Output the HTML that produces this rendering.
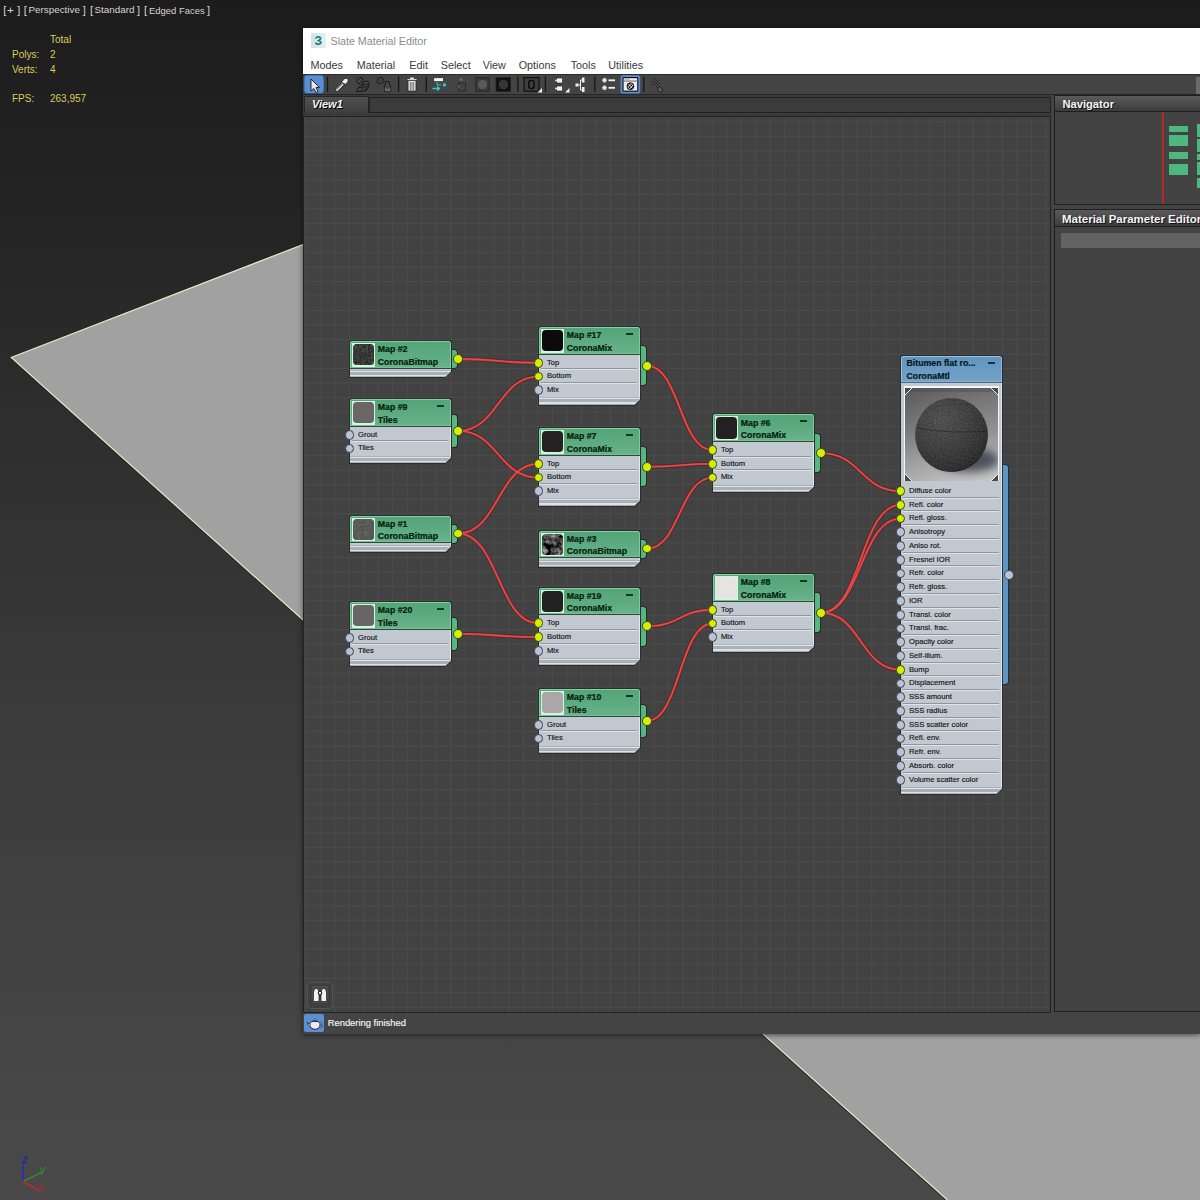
<!DOCTYPE html><html><head><meta charset='utf-8'><style>
*{margin:0;padding:0;box-sizing:border-box}
html,body{width:1200px;height:1200px;overflow:hidden}
body{position:relative;font-family:"Liberation Sans",sans-serif;background:linear-gradient(to bottom,#1c1c1c 0px,#232323 190px,#2b2b2b 360px,#3a3a3a 690px,#474747 1100px,#494949 1200px)}
.a{position:absolute}
.t{position:absolute;white-space:nowrap;line-height:1}
.node{position:absolute;width:103px}
.hdr{position:absolute;left:0;top:0;width:103px;height:28.8px;border:1px solid #27302a;border-bottom:1.3px solid #2f4a3a;border-radius:3px 3px 0 0;background:linear-gradient(to bottom,#53a478 0%,#5daa80 50%,#69b38a 100%);box-shadow:inset 1px 1px 0 #86cfa3,inset -1px 0 0 #80c9a0,inset 0 -1px 0 #79bd92}
.hdr.blue .ttl{color:#06142a}.hdr.blue .minus{background:#14304e}
.hdr.blue{border-color:#262c33;border-bottom-color:#4f6b84;background:linear-gradient(to bottom,#6394bd 0%,#6a9bc2 50%,#72a2c7 100%);box-shadow:inset 1px 1px 0 #9cc0de,inset -1px 0 0 #90b6d8,inset 0 -1px 0 #85aed0}
.thumb{position:absolute;left:1.9px;top:2px;width:23.6px;height:23.6px;background:#d6f2e0}
.thumb i{position:absolute;left:1.1px;top:1.1px;width:21.4px;height:21.4px;border-radius:3.8px;overflow:hidden}
.ttl{position:absolute;left:27.8px;font-weight:bold;font-size:8.75px;color:#04200c;line-height:1;white-space:nowrap;-webkit-text-stroke:0.2px #04200c}
.minus{position:absolute;left:87.3px;top:6.2px;width:6.6px;height:2px;background:#0f3a20}
.body{position:absolute;left:0;width:103px;border-left:1px solid #2a2e33;border-right:1px solid #2a2e33;background:#c1c8d0;box-shadow:inset -1px 0 0 #e2e7ec;clip-path:polygon(0 0,100% 0,100% calc(100% - 6px),calc(100% - 6px) 100%,0 100%)}
.foot{position:absolute;left:1px;width:100px;background:linear-gradient(to bottom,#a9b0b8 0,#a9b0b8 1.2px,#dfe4e8 1.2px,#dfe4e8 2.4px,#a8afb7 2.4px,#aab1b9 5px,#dce1e6 5px,#dce1e6 100%);clip-path:polygon(0 0,100% 0,100% calc(100% - 5px),calc(100% - 5px) 100%,0 100%)}
.row{position:absolute;left:1px;width:100px;height:13.75px}
.row b{position:absolute;left:2px;right:2px;bottom:0;height:1px;background:#8f969e;box-shadow:0 1px 0 #dfe4e9}
.lbl{position:absolute;left:8px;top:3.1px;font-size:7.65px;color:#121416;line-height:1;white-space:nowrap;-webkit-text-stroke:0.15px #121416}
.slot{position:absolute;width:9.8px;height:9.8px;border-radius:50%;background:#b8c4d6;border:1px solid #3a4149}
.slot.on{background:#d2f000;border-color:#3a4025}
.otab{position:absolute;width:6.5px;border:1px solid #232a25;border-left:none;border-radius:0 4px 4px 0;background:linear-gradient(to right,#4fb27c,#5cb986)}
.otab.blue{background:#5d95c3;border-color:#262e37}
</style></head><body>
<svg width="0" height="0" style="position:absolute"><defs><filter id="nz1" x="0" y="0" width="100%" height="100%" color-interpolation-filters="sRGB"><feTurbulence type="fractalNoise" baseFrequency="0.45" numOctaves="2" seed="3"/><feColorMatrix type="matrix" values="0.33 0.33 0.33 0 0  0.33 0.33 0.33 0 0  0.33 0.33 0.33 0 0  0 0 0 0 1"/><feComponentTransfer><feFuncR type="linear" slope="0.6" intercept="-0.07"/><feFuncG type="linear" slope="0.6" intercept="-0.07"/><feFuncB type="linear" slope="0.6" intercept="-0.07"/></feComponentTransfer></filter><filter id="nz3" x="0" y="0" width="100%" height="100%" color-interpolation-filters="sRGB"><feTurbulence type="fractalNoise" baseFrequency="0.2" numOctaves="3" seed="7"/><feColorMatrix type="matrix" values="0.33 0.33 0.33 0 0  0.33 0.33 0.33 0 0  0.33 0.33 0.33 0 0  0 0 0 0 1"/><feComponentTransfer><feFuncR type="linear" slope="2.3" intercept="-0.88"/><feFuncG type="linear" slope="2.3" intercept="-0.88"/><feFuncB type="linear" slope="2.3" intercept="-0.88"/></feComponentTransfer></filter><filter id="nzs" x="0" y="0" width="100%" height="100%" color-interpolation-filters="sRGB"><feTurbulence type="turbulence" baseFrequency="0.9 0.25" numOctaves="2" seed="5"/><feColorMatrix type="matrix" values="0.33 0.33 0.33 0 0  0.33 0.33 0.33 0 0  0.33 0.33 0.33 0 0  0 0 0 0 1"/><feComponentTransfer><feFuncR type="linear" slope="0.22" intercept="0.295"/><feFuncG type="linear" slope="0.22" intercept="0.295"/><feFuncB type="linear" slope="0.22" intercept="0.295"/></feComponentTransfer></filter><filter id="nzb" x="0" y="0" width="100%" height="100%" color-interpolation-filters="sRGB"><feTurbulence type="fractalNoise" baseFrequency="0.6" numOctaves="2" seed="11"/><feColorMatrix type="matrix" values="0.33 0.33 0.33 0 0  0.33 0.33 0.33 0 0  0.33 0.33 0.33 0 0  0 0 0 0 1"/><feComponentTransfer><feFuncR type="linear" slope="1.6" intercept="-0.55"/><feFuncG type="linear" slope="1.6" intercept="-0.55"/><feFuncB type="linear" slope="1.6" intercept="-0.55"/></feComponentTransfer></filter><radialGradient id="sph" cx="0.36" cy="0.3" r="0.75"><stop offset="0" stop-color="#565656"/><stop offset="0.5" stop-color="#424242"/><stop offset="0.85" stop-color="#303030"/><stop offset="1" stop-color="#222"/></radialGradient><linearGradient id="pbg" x1="0" y1="0" x2="0" y2="1"><stop offset="0" stop-color="#646464"/><stop offset="0.45" stop-color="#888"/><stop offset="0.8" stop-color="#b0b0b0"/><stop offset="1" stop-color="#c4c4c4"/></linearGradient><linearGradient id="pbg2" x1="0" y1="0" x2="1" y2="0"><stop offset="0" stop-color="#000" stop-opacity="0.12"/><stop offset="1" stop-color="#fff" stop-opacity="0.08"/></linearGradient><filter id="blur3" x="-50%" y="-50%" width="200%" height="200%"><feGaussianBlur stdDeviation="4"/></filter><clipPath id="sphclip"><ellipse cx="46.5" cy="47" rx="36.3" ry="37"/></clipPath></defs></svg>
<svg class="a" style="left:0;top:0" width="1200" height="1200" viewBox="0 0 1200 1200">
<polygon points="11.25,357.5 400,207 1200,207 1200,1200 947.4,1200" fill="#a1a1a1"/>
<polyline points="400,206 10.2,357.5 947,1201" fill="none" stroke="#111" stroke-width="1.2" opacity="0.6"/>
<polyline points="400,207 11.25,357.5 947.4,1200" fill="none" stroke="#e4e4c4" stroke-width="1.3"/>
</svg>
<div class="t" style="left:3.3px;top:4.8px;font-size:11px;color:#d4d4d4">[</div>
<div class="t" style="left:7.0px;top:4.2px;font-size:11.6px;color:#d4d4d4">+</div>
<div class="t" style="left:17.3px;top:4.8px;font-size:11px;color:#d4d4d4">]</div>
<div class="t" style="left:23.8px;top:4.8px;font-size:11px;color:#d4d4d4">[</div>
<div class="t" style="left:28.4px;top:5.4px;font-size:9.9px;color:#d4d4d4">Perspective</div>
<div class="t" style="left:82.8px;top:4.8px;font-size:11px;color:#d4d4d4">]</div>
<div class="t" style="left:90px;top:4.8px;font-size:11px;color:#d4d4d4">[</div>
<div class="t" style="left:94.5px;top:5.4px;font-size:9.9px;color:#d4d4d4">Standard</div>
<div class="t" style="left:137.1px;top:4.8px;font-size:11px;color:#d4d4d4">]</div>
<div class="t" style="left:144.1px;top:4.8px;font-size:11px;color:#d4d4d4">[</div>
<div class="t" style="left:149px;top:5.8px;font-size:9.45px;color:#d4d4d4">Edged Faces</div>
<div class="t" style="left:207.1px;top:4.8px;font-size:11px;color:#d4d4d4">]</div>
<div class="t" style="left:50px;top:35px;font-size:10px;color:#dccb5a">Total</div>
<div class="t" style="left:12px;top:50px;font-size:10px;color:#dccb5a">Polys:</div>
<div class="t" style="left:50px;top:50px;font-size:10px;color:#dccb5a">2</div>
<div class="t" style="left:12px;top:65px;font-size:10px;color:#dccb5a">Verts:</div>
<div class="t" style="left:50px;top:65px;font-size:10px;color:#dccb5a">4</div>
<div class="t" style="left:12px;top:94px;font-size:10px;color:#dccb5a">FPS:</div>
<div class="t" style="left:50px;top:94px;font-size:10px;color:#dccb5a">263,957</div>
<svg class="a" style="left:10px;top:1150px" width="50" height="50" viewBox="0 0 50 50">
<line x1="13" y1="31.5" x2="13.2" y2="13" stroke="#2a2ac0" stroke-width="1.5"/>
<path d="M13,7 L17,7 L13,12.5 L17,12.5" fill="none" stroke="#2222a8" stroke-width="1.2"/>
<line x1="13.5" y1="31.5" x2="32" y2="22" stroke="#2e9a2e" stroke-width="1.4"/>
<path d="M30.5,17 L32.5,22.5 M35,17 L31.5,25" fill="none" stroke="#2a962a" stroke-width="1"/>
<line x1="13.5" y1="32" x2="30" y2="41" stroke="#c02828" stroke-width="1.5"/>
<path d="M29.5,35.5 L33.5,40.5 M33.5,35.5 L29.5,40.5" fill="none" stroke="#c02020" stroke-width="1.2"/>
</svg>
<div class="a" style="left:303px;top:28px;width:897px;height:1005.8px;background:#444444;box-shadow:0 1px 5px rgba(0,0,0,0.55)"></div>
<div class="a" style="left:303px;top:28px;width:897px;height:46px;background:#ffffff"></div>
<div class="a" style="left:311px;top:33.3px;width:14.7px;height:14.5px;background:linear-gradient(to right,#d4e2e4,#e6f0f1)"></div>
<div class="t" style="left:314.6px;top:33.6px;font-size:13.4px;font-weight:bold;color:#0b7f80">3</div>
<div class="t" style="left:330.5px;top:36.3px;font-size:10.7px;color:#8c8c8c">Slate Material Editor</div>
<div class="t" style="left:310.4px;top:60px;font-size:10.8px;color:#3a3a3a">Modes</div>
<div class="t" style="left:356.7px;top:60px;font-size:10.8px;color:#3a3a3a">Material</div>
<div class="t" style="left:409.3px;top:60px;font-size:10.8px;color:#3a3a3a">Edit</div>
<div class="t" style="left:440.7px;top:60px;font-size:10.8px;color:#3a3a3a">Select</div>
<div class="t" style="left:482.7px;top:60px;font-size:10.8px;color:#3a3a3a">View</div>
<div class="t" style="left:518.7px;top:60px;font-size:10.8px;color:#3a3a3a">Options</div>
<div class="t" style="left:570.7px;top:60px;font-size:10.8px;color:#3a3a3a">Tools</div>
<div class="t" style="left:608.3px;top:60px;font-size:10.8px;color:#3a3a3a">Utilities</div>
<div class="a" style="left:303px;top:74px;width:897px;height:21px;background:#444444;border-top:1px solid #2a2a2a;border-bottom:1px solid #262626"></div>
<svg class="a" style="left:303px;top:74px" width="400" height="22" viewBox="303 74 400 22"><rect x="304" y="75" width="20" height="18.5" rx="3" fill="#5a8ed3" stroke="#2f4f78" stroke-width="0.8"/><path d="M311,79 L311,91 L313.8,88.5 L316,92.5 L318,91.5 L316,87.5 L319.5,87.5 Z" fill="#e8e8e8" stroke="#1a1a1a" stroke-width="0.9" stroke-linejoin="round"/><rect x="326.8" y="76.5" width="1.4" height="15.5" fill="#1a1a1a"/><rect x="397.90000000000003" y="76.5" width="1.4" height="15.5" fill="#1a1a1a"/><rect x="425.6" y="76.5" width="1.4" height="15.5" fill="#1a1a1a"/><rect x="517.1999999999999" y="76.5" width="1.4" height="15.5" fill="#1a1a1a"/><rect x="544.6999999999999" y="76.5" width="1.4" height="15.5" fill="#1a1a1a"/><rect x="594.0999999999999" y="76.5" width="1.4" height="15.5" fill="#1a1a1a"/><rect x="643.0999999999999" y="76.5" width="1.4" height="15.5" fill="#1a1a1a"/><path d="M335,91.3 L335.6,89 L342,82.6 L344.2,84.8 L337.8,91.2 Z" fill="#e4e4e4" stroke="#161616" stroke-width="0.8"/><path d="M336.6,89.6 L342.2,84" stroke="#1a1a1a" stroke-width="0.7"/><path d="M341.2,82.2 L343.2,80 Q344.8,77.6 347,78.3 Q348.8,79.4 348,81.6 L345.6,84.4 Z" fill="#f2f2f2" stroke="#161616" stroke-width="0.8"/><clipPath id="cc1"><circle cx="359.8" cy="80.6" r="3.4"/></clipPath><circle cx="359.8" cy="80.6" r="3.4" fill="#6a6a6a"/><g clip-path="url(#cc1)"><rect x="356.40" y="77.20" width="1.70" height="1.70" fill="#151515"/><rect x="356.40" y="80.60" width="1.70" height="1.70" fill="#151515"/><rect x="358.10" y="78.90" width="1.70" height="1.70" fill="#151515"/><rect x="358.10" y="82.30" width="1.70" height="1.70" fill="#151515"/><rect x="359.80" y="77.20" width="1.70" height="1.70" fill="#151515"/><rect x="359.80" y="80.60" width="1.70" height="1.70" fill="#151515"/><rect x="361.50" y="78.90" width="1.70" height="1.70" fill="#151515"/><rect x="361.50" y="82.30" width="1.70" height="1.70" fill="#151515"/></g><circle cx="359.8" cy="80.6" r="3.4" fill="none" stroke="#151515" stroke-width="0.8"/><path d="M364,81.5 L367.5,81 L369.2,83.5 L368.5,87 L366.5,90.5 L361.5,91.5 L356.5,91.5 L358.5,87.5 L362,85 Z" fill="none" stroke="#151515" stroke-width="0.9"/><path d="M358.5,87.5 L368.5,86.5 M362,85 L368.8,84 M361,91.5 L363,87.3 M365,90.8 L366.8,86.7" fill="none" stroke="#151515" stroke-width="0.8"/><clipPath id="cc2"><circle cx="380.3" cy="80.6" r="3.4"/></clipPath><circle cx="380.3" cy="80.6" r="3.4" fill="#6a6a6a"/><g clip-path="url(#cc2)"><rect x="376.90" y="77.20" width="1.70" height="1.70" fill="#151515"/><rect x="376.90" y="80.60" width="1.70" height="1.70" fill="#151515"/><rect x="378.60" y="78.90" width="1.70" height="1.70" fill="#151515"/><rect x="378.60" y="82.30" width="1.70" height="1.70" fill="#151515"/><rect x="380.30" y="77.20" width="1.70" height="1.70" fill="#151515"/><rect x="380.30" y="80.60" width="1.70" height="1.70" fill="#151515"/><rect x="382.00" y="78.90" width="1.70" height="1.70" fill="#151515"/><rect x="382.00" y="82.30" width="1.70" height="1.70" fill="#151515"/></g><circle cx="380.3" cy="80.6" r="3.4" fill="none" stroke="#151515" stroke-width="0.8"/><path d="M385.2,81.5 L389.2,81.5 L389.2,84 L390.6,86 L390.6,91.6 L384.4,91.6 L384.4,86 L385.8,84 Z" fill="#474747" stroke="#151515" stroke-width="0.9"/><path d="M384.8,87.5 L387.5,89.5 L390.3,87.5 L390.3,91.2 L384.8,91.2 Z" fill="#6c6c6c"/><rect x="408" y="80.5" width="8" height="10.5" rx="0.8" fill="#e8e8e8" stroke="#1c1c1c" stroke-width="0.8"/><rect x="407" y="78.8" width="10" height="1.8" fill="#e8e8e8" stroke="#1c1c1c" stroke-width="0.6"/><rect x="410.2" y="77.5" width="3.6" height="1.5" fill="#e8e8e8"/><path d="M410.3,82 V90 M412,82 V90 M413.7,82 V90" stroke="#555" stroke-width="0.8"/><rect x="433.8" y="77.8" width="9.5" height="3.8" fill="#f2f2f2" stroke="#1a1a1a" stroke-width="0.6"/><path d="M437,82 L437,85 L441,85" fill="none" stroke="#2ec4c4" stroke-width="1"/><rect x="443" y="83.5" width="2.8" height="2.8" fill="#3ad0d0"/><path d="M432.5,88.5 L439,88.5 M437,86.5 L439.5,88.5 L437,90.5" fill="none" stroke="#35c8c8" stroke-width="1.4"/><path d="M461,77.5 L463.5,80.5 L458.5,80.5 Z" fill="#6a6a6a"/><rect x="458.5" y="83" width="7" height="8" fill="none" stroke="#2a2a2a" stroke-width="1"/><path d="M457,86.5 L459,84.5 L461,86.5 L459,88.5 Z" fill="#666" stroke="#2a2a2a" stroke-width="0.8"/><rect x="475.8" y="77.8" width="13.5" height="13.5" fill="#3a3a3a" stroke="#262626" stroke-width="1"/><clipPath id="cc3"><circle cx="482.5" cy="84.5" r="4.6"/></clipPath><circle cx="482.5" cy="84.5" r="4.6" fill="#4a4a4a"/><g clip-path="url(#cc3)"><rect x="477.90" y="79.90" width="1.53" height="1.53" fill="#6a6a6a"/><rect x="477.90" y="82.97" width="1.53" height="1.53" fill="#6a6a6a"/><rect x="477.90" y="86.03" width="1.53" height="1.53" fill="#6a6a6a"/><rect x="479.43" y="81.43" width="1.53" height="1.53" fill="#6a6a6a"/><rect x="479.43" y="84.50" width="1.53" height="1.53" fill="#6a6a6a"/><rect x="479.43" y="87.57" width="1.53" height="1.53" fill="#6a6a6a"/><rect x="480.97" y="79.90" width="1.53" height="1.53" fill="#6a6a6a"/><rect x="480.97" y="82.97" width="1.53" height="1.53" fill="#6a6a6a"/><rect x="480.97" y="86.03" width="1.53" height="1.53" fill="#6a6a6a"/><rect x="482.50" y="81.43" width="1.53" height="1.53" fill="#6a6a6a"/><rect x="482.50" y="84.50" width="1.53" height="1.53" fill="#6a6a6a"/><rect x="482.50" y="87.57" width="1.53" height="1.53" fill="#6a6a6a"/><rect x="484.03" y="79.90" width="1.53" height="1.53" fill="#6a6a6a"/><rect x="484.03" y="82.97" width="1.53" height="1.53" fill="#6a6a6a"/><rect x="484.03" y="86.03" width="1.53" height="1.53" fill="#6a6a6a"/><rect x="485.57" y="81.43" width="1.53" height="1.53" fill="#6a6a6a"/><rect x="485.57" y="84.50" width="1.53" height="1.53" fill="#6a6a6a"/><rect x="485.57" y="87.57" width="1.53" height="1.53" fill="#6a6a6a"/></g><rect x="496" y="77.5" width="14.5" height="14" fill="#111" stroke="#222" stroke-width="0.8"/><clipPath id="cc4"><circle cx="503.3" cy="84.5" r="4.8"/></clipPath><circle cx="503.3" cy="84.5" r="4.8" fill="#1a1a1a"/><g clip-path="url(#cc4)"><rect x="498.50" y="79.70" width="1.60" height="1.60" fill="#555"/><rect x="498.50" y="82.90" width="1.60" height="1.60" fill="#555"/><rect x="498.50" y="86.10" width="1.60" height="1.60" fill="#555"/><rect x="500.10" y="81.30" width="1.60" height="1.60" fill="#555"/><rect x="500.10" y="84.50" width="1.60" height="1.60" fill="#555"/><rect x="500.10" y="87.70" width="1.60" height="1.60" fill="#555"/><rect x="501.70" y="79.70" width="1.60" height="1.60" fill="#555"/><rect x="501.70" y="82.90" width="1.60" height="1.60" fill="#555"/><rect x="501.70" y="86.10" width="1.60" height="1.60" fill="#555"/><rect x="503.30" y="81.30" width="1.60" height="1.60" fill="#555"/><rect x="503.30" y="84.50" width="1.60" height="1.60" fill="#555"/><rect x="503.30" y="87.70" width="1.60" height="1.60" fill="#555"/><rect x="504.90" y="79.70" width="1.60" height="1.60" fill="#555"/><rect x="504.90" y="82.90" width="1.60" height="1.60" fill="#555"/><rect x="504.90" y="86.10" width="1.60" height="1.60" fill="#555"/><rect x="506.50" y="81.30" width="1.60" height="1.60" fill="#555"/><rect x="506.50" y="84.50" width="1.60" height="1.60" fill="#555"/><rect x="506.50" y="87.70" width="1.60" height="1.60" fill="#555"/></g><rect x="524" y="77.6" width="15" height="13.6" fill="#3e3e3e" stroke="#111" stroke-width="1.2"/><rect x="528.8" y="80.5" width="5.2" height="8" rx="2.2" fill="none" stroke="#0c0c0c" stroke-width="1.6"/><path d="M537.5,92.5 L542,92.5 L542,88 Z" fill="#f0f0f0"/><rect x="556.5" y="78" width="6" height="5" fill="#f0f0f0" stroke="#1a1a1a" stroke-width="0.6"/><rect x="556.5" y="86" width="6" height="5" fill="#f0f0f0" stroke="#1a1a1a" stroke-width="0.6"/><circle cx="556" cy="80.5" r="0.9" fill="#f0f0f0"/><circle cx="556" cy="88.5" r="0.9" fill="#f0f0f0"/><path d="M565,92.5 L569.5,92.5 L569.5,88 Z" fill="#f0f0f0"/><rect x="575.5" y="83.5" width="3" height="3" fill="#f0f0f0"/><path d="M578.5,85 L580.5,85 M580.5,80 L580.5,90 M580.5,80 L582,80 M580.5,90 L582,90" fill="none" stroke="#f0f0f0" stroke-width="1"/><rect x="582" y="77.5" width="2.5" height="5" fill="#f0f0f0"/><rect x="582" y="87" width="2.5" height="5" fill="#f0f0f0"/><path d="M603,80.3 h3 M604.5,78.8 v3" stroke="#f2f2f2" stroke-width="1.4" fill="none"/><circle cx="604.5" cy="80.3" r="1.9" fill="none" stroke="#f2f2f2" stroke-width="0.9"/><rect x="608.5" y="79.39999999999999" width="6.5" height="1.8" fill="#f2f2f2"/><path d="M603,87.8 h3 M604.5,86.3 v3" stroke="#f2f2f2" stroke-width="1.4" fill="none"/><circle cx="604.5" cy="87.8" r="1.9" fill="none" stroke="#f2f2f2" stroke-width="0.9"/><rect x="608.5" y="86.89999999999999" width="6.5" height="1.8" fill="#f2f2f2"/><rect x="620.6" y="75.2" width="19.6" height="18.4" rx="2.6" fill="#5a8ed6"/><rect x="622.4" y="77" width="16" height="14.8" rx="1" fill="#101418"/><rect x="623.6" y="78.2" width="13.6" height="12.4" fill="#ececec"/><rect x="623.6" y="80.6" width="13.6" height="0.9" fill="#555"/><circle cx="625.2" cy="79.3" r="0.45" fill="#333"/><circle cx="626.8" cy="79.3" r="0.45" fill="#333"/><circle cx="628.4" cy="79.3" r="0.45" fill="#333"/><clipPath id="cc5"><circle cx="630.4" cy="86.2" r="3.4"/></clipPath><circle cx="630.4" cy="86.2" r="3.4" fill="#0a0a0a"/><g clip-path="url(#cc5)"><rect x="627.00" y="82.80" width="1.70" height="1.70" fill="#f0f0f0"/><rect x="627.00" y="86.20" width="1.70" height="1.70" fill="#f0f0f0"/><rect x="628.70" y="84.50" width="1.70" height="1.70" fill="#f0f0f0"/><rect x="628.70" y="87.90" width="1.70" height="1.70" fill="#f0f0f0"/><rect x="630.40" y="82.80" width="1.70" height="1.70" fill="#f0f0f0"/><rect x="630.40" y="86.20" width="1.70" height="1.70" fill="#f0f0f0"/><rect x="632.10" y="84.50" width="1.70" height="1.70" fill="#f0f0f0"/><rect x="632.10" y="87.90" width="1.70" height="1.70" fill="#f0f0f0"/></g><circle cx="630.4" cy="86.2" r="3.4" fill="none" stroke="#0a0a0a" stroke-width="0.9"/><clipPath id="cc6"><circle cx="655.6" cy="82.6" r="4.6"/></clipPath><circle cx="655.6" cy="82.6" r="4.6" fill="#5a5a5a"/><g clip-path="url(#cc6)"><rect x="651.00" y="78.00" width="1.53" height="1.53" fill="#1e1e1e"/><rect x="651.00" y="81.07" width="1.53" height="1.53" fill="#1e1e1e"/><rect x="651.00" y="84.13" width="1.53" height="1.53" fill="#1e1e1e"/><rect x="652.53" y="79.53" width="1.53" height="1.53" fill="#1e1e1e"/><rect x="652.53" y="82.60" width="1.53" height="1.53" fill="#1e1e1e"/><rect x="652.53" y="85.67" width="1.53" height="1.53" fill="#1e1e1e"/><rect x="654.07" y="78.00" width="1.53" height="1.53" fill="#1e1e1e"/><rect x="654.07" y="81.07" width="1.53" height="1.53" fill="#1e1e1e"/><rect x="654.07" y="84.13" width="1.53" height="1.53" fill="#1e1e1e"/><rect x="655.60" y="79.53" width="1.53" height="1.53" fill="#1e1e1e"/><rect x="655.60" y="82.60" width="1.53" height="1.53" fill="#1e1e1e"/><rect x="655.60" y="85.67" width="1.53" height="1.53" fill="#1e1e1e"/><rect x="657.13" y="78.00" width="1.53" height="1.53" fill="#1e1e1e"/><rect x="657.13" y="81.07" width="1.53" height="1.53" fill="#1e1e1e"/><rect x="657.13" y="84.13" width="1.53" height="1.53" fill="#1e1e1e"/><rect x="658.67" y="79.53" width="1.53" height="1.53" fill="#1e1e1e"/><rect x="658.67" y="82.60" width="1.53" height="1.53" fill="#1e1e1e"/><rect x="658.67" y="85.67" width="1.53" height="1.53" fill="#1e1e1e"/></g><path d="M658.5,86.5 L661.5,88 L663,91 L660.5,92.5 L657.5,89.5 Z" fill="#5a5a5a" stroke="#1e1e1e" stroke-width="0.9"/></svg>
<div class="a" style="left:1196px;top:77px;width:4px;height:17px;background:#6a6a6a"></div>
<div class="a" style="left:303px;top:95px;width:748px;height:22px;background:#3a3a3a"></div>
<div class="a" style="left:304px;top:96px;width:65px;height:17px;background:linear-gradient(#505050,#3e3e3e);border:1px solid #262626;border-bottom:none"></div>
<div class="a" style="left:369px;top:97px;width:682px;height:16px;background:#3b3b3b;border:1px solid #222"></div>
<div class="t" style="left:312px;top:98.5px;font-size:11px;font-weight:bold;font-style:italic;color:#f2f2f2;text-shadow:1px 1px 0 #000">View1</div>
<div class="a" style="left:303px;top:116px;width:748px;height:897px;border:1px solid #232323;background-color:#424242;background-image:linear-gradient(to right,#4b4b4b 1px,transparent 1px),linear-gradient(to bottom,#4b4b4b 1px,transparent 1px);background-size:14.53px 14.53px;background-position:15.7px 4.3px"></div>
<div class="a" style="left:1054px;top:95px;width:146px;height:110px;background:#434343;border:1px solid #1e1e1e;border-right:none"></div>
<div class="a" style="left:1055px;top:96px;width:145px;height:16px;background:linear-gradient(#5a5a5a,#3c3c3c);border-bottom:1px solid #1e1e1e"></div>
<div class="t" style="left:1062.4px;top:98.7px;font-size:11.2px;font-weight:bold;color:#f4f4f4;text-shadow:1px 1px 0 #111">Navigator</div>
<div class="a" style="left:1162px;top:112px;width:2px;height:92px;background:#b02a2a"></div>
<div class="a" style="left:1169.2px;top:126.3px;width:18.799999999999955px;height:6.200000000000003px;background:#4cb87e"></div>
<div class="a" style="left:1169.2px;top:134.7px;width:18.799999999999955px;height:11.100000000000023px;background:#4cb87e"></div>
<div class="a" style="left:1169.2px;top:152px;width:18.799999999999955px;height:6.699999999999989px;background:#4cb87e"></div>
<div class="a" style="left:1169.2px;top:164.2px;width:18.799999999999955px;height:11.100000000000023px;background:#4cb87e"></div>
<div class="a" style="left:1197.2px;top:124px;width:2.7999999999999545px;height:13px;background:#4cb87e"></div>
<div class="a" style="left:1197.2px;top:139px;width:2.7999999999999545px;height:12.699999999999989px;background:#4cb87e"></div>
<div class="a" style="left:1197.2px;top:154px;width:2.7999999999999545px;height:6px;background:#4cb87e"></div>
<div class="a" style="left:1197.2px;top:162px;width:2.7999999999999545px;height:13px;background:#4cb87e"></div>
<div class="a" style="left:1197.2px;top:177.5px;width:2.7999999999999545px;height:10.5px;background:#4cb87e"></div>
<div class="a" style="left:1054px;top:209px;width:146px;height:803px;background:#434343;border:1px solid #1e1e1e;border-right:none"></div>
<div class="a" style="left:1055px;top:210px;width:145px;height:17px;background:linear-gradient(#5a5a5a,#3c3c3c);border-bottom:1px solid #1e1e1e"></div>
<div class="t" style="left:1062px;top:213.5px;font-size:11.5px;font-weight:bold;color:#f4f4f4;text-shadow:1px 1px 0 #111">Material Parameter Editor</div>
<div class="a" style="left:1061px;top:233px;width:139px;height:15px;background:#626262"></div>
<div class="t" style="left:327.7px;top:1018.2px;font-size:9.4px;color:#f6f6f6;-webkit-text-stroke:0.15px #f6f6f6">Rendering finished</div>
<div class="a" style="left:306.8px;top:981.5px;width:26.7px;height:27.5px;border:1px solid #555;border-radius:4px;background:#3f3f3f"></div><svg class="a" style="left:306px;top:981px" width="28" height="28" viewBox="0 0 28 28"><rect x="6" y="5" width="16" height="17" rx="2" fill="#555" opacity="0.6"/><path d="M7.5,20.5 L7.5,11 L9,7.5 L11.5,7.5 L13,11 L13,20.5 Z" fill="#f4f4f4" stroke="#1a1a1a" stroke-width="0.7"/><path d="M15,20.5 L15,11 L16.5,7.5 L19,7.5 L20.5,11 L20.5,20.5 Z" fill="#f4f4f4" stroke="#1a1a1a" stroke-width="0.7"/><circle cx="14" cy="12" r="1.8" fill="#f4f4f4" stroke="#111" stroke-width="1"/><path d="M14,14 V19" stroke="#333" stroke-width="1.2"/></svg><div class="a" style="left:304px;top:1013.5px;width:20px;height:18.5px;background:#5a8fd6;border-radius:2px"></div><svg class="a" style="left:304px;top:1013px" width="20" height="20" viewBox="0 0 20 20"><path d="M6,10.5 Q6.5,8.2 11,8.2 Q15.5,8.2 16,10.5 Q16.5,13.8 14.5,15.2 Q12.5,16.3 11,16.3 Q9,16.3 7.5,15.2 Q5.5,13.8 6,10.5 Z" fill="#ecebea" stroke="#18263a" stroke-width="1"/><path d="M6.2,11.5 Q5,10.5 3.3,9.3 Q3.8,11.5 5,12.8 Q5.8,13.6 6.5,13.8" fill="#ecebea" stroke="#18263a" stroke-width="0.9"/><path d="M15.8,10.2 Q18.3,9.6 18.2,11.8 Q18,13.6 15.2,14" fill="none" stroke="#18263a" stroke-width="1.6"/><path d="M15.8,10.2 Q18.3,9.6 18.2,11.8 Q18,13.6 15.2,14" fill="none" stroke="#ecebea" stroke-width="0.6"/><path d="M9,8.3 Q11,6.6 13,8.3 Z" fill="#ecebea" stroke="#18263a" stroke-width="0.8"/><circle cx="11" cy="6.6" r="0.9" fill="#ecebea" stroke="#18263a" stroke-width="0.6"/></svg>
<svg class="a" style="left:0;top:0" width="1200" height="1200"><g fill="none" stroke="#3a1616" stroke-width="3.6" opacity="0.6"><path d="M458.0,359.0 C498.2,359.0 498.2,362.8 538.5,362.8"/><path d="M458.0,430.9 C498.2,430.9 498.2,376.6 538.5,376.6"/><path d="M458.0,430.9 C498.2,430.9 498.2,477.6 538.5,477.6"/><path d="M458.0,533.5 C498.2,533.5 498.2,463.8 538.5,463.8"/><path d="M458.0,533.5 C498.2,533.5 498.2,623.3 538.5,623.3"/><path d="M458.0,633.9 C498.2,633.9 498.2,637.0 538.5,637.0"/><path d="M647.0,365.8 C679.8,365.8 679.8,450.1 712.5,450.1"/><path d="M647.0,466.8 C679.8,466.8 679.8,463.9 712.5,463.9"/><path d="M647.0,548.5 C679.8,548.5 679.8,477.6 712.5,477.6"/><path d="M647.0,626.3 C679.8,626.3 679.8,609.8 712.5,609.8"/><path d="M647.0,720.9 C679.8,720.9 679.8,623.5 712.5,623.5"/><path d="M821.0,453.1 C860.8,453.1 860.8,491.1 900.5,491.1"/><path d="M821.0,612.8 C860.8,612.8 860.8,504.9 900.5,504.9"/><path d="M821.0,612.8 C860.8,612.8 860.8,518.6 900.5,518.6"/><path d="M821.0,612.8 C860.8,612.8 860.8,669.8 900.5,669.8"/></g><g fill="none" stroke="#d03838" stroke-width="2.4"><path d="M458.0,359.0 C498.2,359.0 498.2,362.8 538.5,362.8"/><path d="M458.0,430.9 C498.2,430.9 498.2,376.6 538.5,376.6"/><path d="M458.0,430.9 C498.2,430.9 498.2,477.6 538.5,477.6"/><path d="M458.0,533.5 C498.2,533.5 498.2,463.8 538.5,463.8"/><path d="M458.0,533.5 C498.2,533.5 498.2,623.3 538.5,623.3"/><path d="M458.0,633.9 C498.2,633.9 498.2,637.0 538.5,637.0"/><path d="M647.0,365.8 C679.8,365.8 679.8,450.1 712.5,450.1"/><path d="M647.0,466.8 C679.8,466.8 679.8,463.9 712.5,463.9"/><path d="M647.0,548.5 C679.8,548.5 679.8,477.6 712.5,477.6"/><path d="M647.0,626.3 C679.8,626.3 679.8,609.8 712.5,609.8"/><path d="M647.0,720.9 C679.8,720.9 679.8,623.5 712.5,623.5"/><path d="M821.0,453.1 C860.8,453.1 860.8,491.1 900.5,491.1"/><path d="M821.0,612.8 C860.8,612.8 860.8,504.9 900.5,504.9"/><path d="M821.0,612.8 C860.8,612.8 860.8,518.6 900.5,518.6"/><path d="M821.0,612.8 C860.8,612.8 860.8,669.8 900.5,669.8"/></g><g fill="none" stroke="#ee6a6a" stroke-width="0.8" opacity="0.7"><path d="M458.0,359.0 C498.2,359.0 498.2,362.8 538.5,362.8"/><path d="M458.0,430.9 C498.2,430.9 498.2,376.6 538.5,376.6"/><path d="M458.0,430.9 C498.2,430.9 498.2,477.6 538.5,477.6"/><path d="M458.0,533.5 C498.2,533.5 498.2,463.8 538.5,463.8"/><path d="M458.0,533.5 C498.2,533.5 498.2,623.3 538.5,623.3"/><path d="M458.0,633.9 C498.2,633.9 498.2,637.0 538.5,637.0"/><path d="M647.0,365.8 C679.8,365.8 679.8,450.1 712.5,450.1"/><path d="M647.0,466.8 C679.8,466.8 679.8,463.9 712.5,463.9"/><path d="M647.0,548.5 C679.8,548.5 679.8,477.6 712.5,477.6"/><path d="M647.0,626.3 C679.8,626.3 679.8,609.8 712.5,609.8"/><path d="M647.0,720.9 C679.8,720.9 679.8,623.5 712.5,623.5"/><path d="M821.0,453.1 C860.8,453.1 860.8,491.1 900.5,491.1"/><path d="M821.0,612.8 C860.8,612.8 860.8,504.9 900.5,504.9"/><path d="M821.0,612.8 C860.8,612.8 860.8,518.6 900.5,518.6"/><path d="M821.0,612.8 C860.8,612.8 860.8,669.8 900.5,669.8"/></g></svg>
<div class="node" style="left:349px;top:340px;height:38.00px"><div class="otab" style="left:102px;top:9.00px;height:20.00px"></div><div class="body" style="top:28px;height:10.00px"></div><div class="hdr"><div class="thumb"><i style="background:transparent"><svg width="21.4" height="21.4" viewBox="0 0 21.4 21.4" style="position:absolute;left:0;top:0"><clipPath id="tc_m2"><rect x="0" y="0" width="21.4" height="21.4" rx="3.8"/></clipPath><g clip-path="url(#tc_m2)"><rect width="22" height="22" fill="#3a3a38"/><rect width="21" height="21" filter="url(#nz1)" opacity="0.9"/></g></svg></i></div><div class="ttl" style="top:4.3px">Map #2</div><div class="ttl" style="top:16.7px">CoronaBitmap</div></div><div class="foot" style="top:30.10px;height:6.90px"></div><svg class="a" style="left:0;top:30.00px" width="103" height="8" viewBox="0 0 103 8"><path d="M102.4,0 L102.4,2.2 L96.8,7.4 L0,7.4" fill="none" stroke="#2a2e33" stroke-width="1.3"/></svg><div class="slot on" style="left:104.10px;top:14.10px"></div></div><div class="node" style="left:349px;top:398px;height:65.80px"><div class="otab" style="left:102px;top:15.95px;height:33.90px"></div><div class="body" style="top:28px;height:37.80px"></div><div class="hdr"><div class="thumb"><i style="background:#6a6667"></i></div><div class="ttl" style="top:4.3px">Map #9</div><div class="ttl" style="top:16.7px">Tiles</div><div class="minus"></div></div><div class="row" style="top:29.50px"><b></b><span class="lbl">Grout</span></div><div class="row" style="top:43.25px"><span class="lbl">Tiles</span></div><div class="foot" style="top:57.60px;height:7.20px"></div><svg class="a" style="left:0;top:57.80px" width="103" height="8" viewBox="0 0 103 8"><path d="M102.4,0 L102.4,2.2 L96.8,7.4 L0,7.4" fill="none" stroke="#2a2e33" stroke-width="1.3"/></svg><div class="slot" style="left:-4.40px;top:31.90px"></div><div class="slot" style="left:-4.40px;top:45.65px"></div><div class="slot on" style="left:104.10px;top:28.00px"></div></div><div class="node" style="left:349px;top:514.5px;height:38.00px"><div class="otab" style="left:102px;top:9.00px;height:20.00px"></div><div class="body" style="top:28px;height:10.00px"></div><div class="hdr"><div class="thumb"><i style="background:transparent"><svg width="21.4" height="21.4" viewBox="0 0 21.4 21.4" style="position:absolute;left:0;top:0"><clipPath id="tc_m1"><rect x="0" y="0" width="21.4" height="21.4" rx="3.8"/></clipPath><g clip-path="url(#tc_m1)"><rect width="22" height="22" fill="#5e5a5c"/><rect width="21" height="21" filter="url(#nzs)"/></g></svg></i></div><div class="ttl" style="top:4.3px">Map #1</div><div class="ttl" style="top:16.7px">CoronaBitmap</div></div><div class="foot" style="top:30.10px;height:6.90px"></div><svg class="a" style="left:0;top:30.00px" width="103" height="8" viewBox="0 0 103 8"><path d="M102.4,0 L102.4,2.2 L96.8,7.4 L0,7.4" fill="none" stroke="#2a2e33" stroke-width="1.3"/></svg><div class="slot on" style="left:104.10px;top:14.10px"></div></div><div class="node" style="left:349px;top:601px;height:65.80px"><div class="otab" style="left:102px;top:15.95px;height:33.90px"></div><div class="body" style="top:28px;height:37.80px"></div><div class="hdr"><div class="thumb"><i style="background:#686566"></i></div><div class="ttl" style="top:4.3px">Map #20</div><div class="ttl" style="top:16.7px">Tiles</div><div class="minus"></div></div><div class="row" style="top:29.50px"><b></b><span class="lbl">Grout</span></div><div class="row" style="top:43.25px"><span class="lbl">Tiles</span></div><div class="foot" style="top:57.60px;height:7.20px"></div><svg class="a" style="left:0;top:57.80px" width="103" height="8" viewBox="0 0 103 8"><path d="M102.4,0 L102.4,2.2 L96.8,7.4 L0,7.4" fill="none" stroke="#2a2e33" stroke-width="1.3"/></svg><div class="slot" style="left:-4.40px;top:31.90px"></div><div class="slot" style="left:-4.40px;top:45.65px"></div><div class="slot on" style="left:104.10px;top:28.00px"></div></div><div class="node" style="left:538px;top:326px;height:79.55px"><div class="otab" style="left:102px;top:19.39px;height:40.77px"></div><div class="body" style="top:28px;height:51.55px"></div><div class="hdr"><div class="thumb"><i style="background:#0b0b0b"></i></div><div class="ttl" style="top:4.3px">Map #17</div><div class="ttl" style="top:16.7px">CoronaMix</div><div class="minus"></div></div><div class="row" style="top:29.50px"><b></b><span class="lbl">Top</span></div><div class="row" style="top:43.25px"><b></b><span class="lbl">Bottom</span></div><div class="row" style="top:57.00px"><span class="lbl">Mix</span></div><div class="foot" style="top:71.35px;height:7.20px"></div><svg class="a" style="left:0;top:71.55px" width="103" height="8" viewBox="0 0 103 8"><path d="M102.4,0 L102.4,2.2 L96.8,7.4 L0,7.4" fill="none" stroke="#2a2e33" stroke-width="1.3"/></svg><div class="slot on" style="left:-4.40px;top:31.90px"></div><div class="slot on" style="left:-4.40px;top:45.65px"></div><div class="slot" style="left:-4.40px;top:59.40px"></div><div class="slot on" style="left:104.10px;top:34.88px"></div></div><div class="node" style="left:538px;top:427px;height:79.55px"><div class="otab" style="left:102px;top:19.39px;height:40.77px"></div><div class="body" style="top:28px;height:51.55px"></div><div class="hdr"><div class="thumb"><i style="background:#242222"></i></div><div class="ttl" style="top:4.3px">Map #7</div><div class="ttl" style="top:16.7px">CoronaMix</div><div class="minus"></div></div><div class="row" style="top:29.50px"><b></b><span class="lbl">Top</span></div><div class="row" style="top:43.25px"><b></b><span class="lbl">Bottom</span></div><div class="row" style="top:57.00px"><span class="lbl">Mix</span></div><div class="foot" style="top:71.35px;height:7.20px"></div><svg class="a" style="left:0;top:71.55px" width="103" height="8" viewBox="0 0 103 8"><path d="M102.4,0 L102.4,2.2 L96.8,7.4 L0,7.4" fill="none" stroke="#2a2e33" stroke-width="1.3"/></svg><div class="slot on" style="left:-4.40px;top:31.90px"></div><div class="slot on" style="left:-4.40px;top:45.65px"></div><div class="slot" style="left:-4.40px;top:59.40px"></div><div class="slot on" style="left:104.10px;top:34.88px"></div></div><div class="node" style="left:538px;top:529.5px;height:38.00px"><div class="otab" style="left:102px;top:9.00px;height:20.00px"></div><div class="body" style="top:28px;height:10.00px"></div><div class="hdr"><div class="thumb"><i style="background:transparent"><svg width="21.4" height="21.4" viewBox="0 0 21.4 21.4" style="position:absolute;left:0;top:0"><clipPath id="tc_m3"><rect x="0" y="0" width="21.4" height="21.4" rx="3.8"/></clipPath><g clip-path="url(#tc_m3)"><rect width="22" height="22" fill="#444"/><rect width="21" height="21" filter="url(#nz3)"/></g></svg></i></div><div class="ttl" style="top:4.3px">Map #3</div><div class="ttl" style="top:16.7px">CoronaBitmap</div></div><div class="foot" style="top:30.10px;height:6.90px"></div><svg class="a" style="left:0;top:30.00px" width="103" height="8" viewBox="0 0 103 8"><path d="M102.4,0 L102.4,2.2 L96.8,7.4 L0,7.4" fill="none" stroke="#2a2e33" stroke-width="1.3"/></svg><div class="slot on" style="left:104.10px;top:14.10px"></div></div><div class="node" style="left:538px;top:586.5px;height:79.55px"><div class="otab" style="left:102px;top:19.39px;height:40.77px"></div><div class="body" style="top:28px;height:51.55px"></div><div class="hdr"><div class="thumb"><i style="background:#222020"></i></div><div class="ttl" style="top:4.3px">Map #19</div><div class="ttl" style="top:16.7px">CoronaMix</div><div class="minus"></div></div><div class="row" style="top:29.50px"><b></b><span class="lbl">Top</span></div><div class="row" style="top:43.25px"><b></b><span class="lbl">Bottom</span></div><div class="row" style="top:57.00px"><span class="lbl">Mix</span></div><div class="foot" style="top:71.35px;height:7.20px"></div><svg class="a" style="left:0;top:71.55px" width="103" height="8" viewBox="0 0 103 8"><path d="M102.4,0 L102.4,2.2 L96.8,7.4 L0,7.4" fill="none" stroke="#2a2e33" stroke-width="1.3"/></svg><div class="slot on" style="left:-4.40px;top:31.90px"></div><div class="slot on" style="left:-4.40px;top:45.65px"></div><div class="slot" style="left:-4.40px;top:59.40px"></div><div class="slot on" style="left:104.10px;top:34.88px"></div></div><div class="node" style="left:538px;top:688px;height:65.80px"><div class="otab" style="left:102px;top:15.95px;height:33.90px"></div><div class="body" style="top:28px;height:37.80px"></div><div class="hdr"><div class="thumb"><i style="background:#aba7a8"></i></div><div class="ttl" style="top:4.3px">Map #10</div><div class="ttl" style="top:16.7px">Tiles</div><div class="minus"></div></div><div class="row" style="top:29.50px"><b></b><span class="lbl">Grout</span></div><div class="row" style="top:43.25px"><span class="lbl">Tiles</span></div><div class="foot" style="top:57.60px;height:7.20px"></div><svg class="a" style="left:0;top:57.80px" width="103" height="8" viewBox="0 0 103 8"><path d="M102.4,0 L102.4,2.2 L96.8,7.4 L0,7.4" fill="none" stroke="#2a2e33" stroke-width="1.3"/></svg><div class="slot" style="left:-4.40px;top:31.90px"></div><div class="slot" style="left:-4.40px;top:45.65px"></div><div class="slot on" style="left:104.10px;top:28.00px"></div></div><div class="node" style="left:712px;top:413.3px;height:79.55px"><div class="otab" style="left:102px;top:19.39px;height:40.77px"></div><div class="body" style="top:28px;height:51.55px"></div><div class="hdr"><div class="thumb"><i style="background:#232121"></i></div><div class="ttl" style="top:4.3px">Map #6</div><div class="ttl" style="top:16.7px">CoronaMix</div><div class="minus"></div></div><div class="row" style="top:29.50px"><b></b><span class="lbl">Top</span></div><div class="row" style="top:43.25px"><b></b><span class="lbl">Bottom</span></div><div class="row" style="top:57.00px"><span class="lbl">Mix</span></div><div class="foot" style="top:71.35px;height:7.20px"></div><svg class="a" style="left:0;top:71.55px" width="103" height="8" viewBox="0 0 103 8"><path d="M102.4,0 L102.4,2.2 L96.8,7.4 L0,7.4" fill="none" stroke="#2a2e33" stroke-width="1.3"/></svg><div class="slot on" style="left:-4.40px;top:31.90px"></div><div class="slot on" style="left:-4.40px;top:45.65px"></div><div class="slot on" style="left:-4.40px;top:59.40px"></div><div class="slot on" style="left:104.10px;top:34.88px"></div></div><div class="node" style="left:712px;top:573px;height:79.55px"><div class="otab" style="left:102px;top:19.39px;height:40.77px"></div><div class="body" style="top:28px;height:51.55px"></div><div class="hdr"><div class="thumb"><i style="background:#e6e4e3"></i></div><div class="ttl" style="top:4.3px">Map #8</div><div class="ttl" style="top:16.7px">CoronaMix</div><div class="minus"></div></div><div class="row" style="top:29.50px"><b></b><span class="lbl">Top</span></div><div class="row" style="top:43.25px"><b></b><span class="lbl">Bottom</span></div><div class="row" style="top:57.00px"><span class="lbl">Mix</span></div><div class="foot" style="top:71.35px;height:7.20px"></div><svg class="a" style="left:0;top:71.55px" width="103" height="8" viewBox="0 0 103 8"><path d="M102.4,0 L102.4,2.2 L96.8,7.4 L0,7.4" fill="none" stroke="#2a2e33" stroke-width="1.3"/></svg><div class="slot on" style="left:-4.40px;top:31.90px"></div><div class="slot on" style="left:-4.40px;top:45.65px"></div><div class="slot" style="left:-4.40px;top:59.40px"></div><div class="slot on" style="left:104.10px;top:34.88px"></div></div><div class="node" style="left:900px;top:354.6px;height:440.50px"><div class="otab blue" style="left:102px;top:109.62px;height:221.25px"></div><div class="body" style="top:28px;height:412.50px"></div><div class="hdr blue"><div class="ttl" style="left:5.5px;top:3.8px">Bitumen flat ro...</div><div class="ttl" style="left:5.5px;top:16.6px">CoronaMtl</div><div class="minus"></div></div><div class="a" style="left:3.5px;top:31.5px;width:95.5px;height:95px;background:#f4f6f8"></div><div class="a" style="left:5px;top:33px;width:93px;height:93px;overflow:hidden"><svg width="93" height="93" viewBox="0 0 93 93" style="position:absolute;left:0;top:0"><rect width="93" height="93" fill="url(#pbg)"/><rect width="93" height="93" fill="url(#pbg2)"/><rect width="93" height="4" fill="#4a4a4a" opacity="0.4"/><ellipse cx="64" cy="72" rx="30" ry="12" fill="#2a3040" opacity="0.75" filter="url(#blur3)"/><ellipse cx="46.5" cy="47" rx="36.3" ry="37" fill="url(#sph)"/><g clip-path="url(#sphclip)"><rect x="8" y="8" width="78" height="78" filter="url(#nzb)" opacity="0.3"/><rect x="8" y="8" width="78" height="78" fill="url(#sph)" opacity="0.45"/></g><path d="M12,40 Q46,46 82,43" fill="none" stroke="#222" stroke-width="0.9" opacity="0.7"/><path d="M22,20 Q48,14 70,18" fill="none" stroke="#333" stroke-width="0.7" opacity="0.5"/><path d="M0,0 L7,0 L0,7 Z" fill="#4a4a4a"/><path d="M7,0 L0,7" stroke="#f0f0f0" stroke-width="1"/><path d="M93,0 L86,0 L93,7 Z" fill="#4a4a4a"/><path d="M86,0 L93,7" stroke="#f0f0f0" stroke-width="1"/><path d="M0,93 L7,93 L0,86 Z" fill="#4a4a4a"/><path d="M7,93 L0,86" stroke="#f0f0f0" stroke-width="1"/><path d="M93,93 L86,93 L93,86 Z" fill="#4a4a4a"/><path d="M86,93 L93,86" stroke="#f0f0f0" stroke-width="1"/></svg></div><div class="row" style="top:129.20px"><b></b><span class="lbl">Diffuse color</span></div><div class="row" style="top:142.95px"><b></b><span class="lbl">Refl. color</span></div><div class="row" style="top:156.70px"><b></b><span class="lbl">Refl. gloss.</span></div><div class="row" style="top:170.45px"><b></b><span class="lbl">Anisotropy</span></div><div class="row" style="top:184.20px"><b></b><span class="lbl">Aniso rot.</span></div><div class="row" style="top:197.95px"><b></b><span class="lbl">Fresnel IOR</span></div><div class="row" style="top:211.70px"><b></b><span class="lbl">Refr. color</span></div><div class="row" style="top:225.45px"><b></b><span class="lbl">Refr. gloss.</span></div><div class="row" style="top:239.20px"><b></b><span class="lbl">IOR</span></div><div class="row" style="top:252.95px"><b></b><span class="lbl">Transl. color</span></div><div class="row" style="top:266.70px"><b></b><span class="lbl">Transl. frac.</span></div><div class="row" style="top:280.45px"><b></b><span class="lbl">Opacity color</span></div><div class="row" style="top:294.20px"><b></b><span class="lbl">Self-illum.</span></div><div class="row" style="top:307.95px"><b></b><span class="lbl">Bump</span></div><div class="row" style="top:321.70px"><b></b><span class="lbl">Displacement</span></div><div class="row" style="top:335.45px"><b></b><span class="lbl">SSS amount</span></div><div class="row" style="top:349.20px"><b></b><span class="lbl">SSS radius</span></div><div class="row" style="top:362.95px"><b></b><span class="lbl">SSS scatter color</span></div><div class="row" style="top:376.70px"><b></b><span class="lbl">Refl. env.</span></div><div class="row" style="top:390.45px"><b></b><span class="lbl">Refr. env.</span></div><div class="row" style="top:404.20px"><b></b><span class="lbl">Absorb. color</span></div><div class="row" style="top:417.95px"><span class="lbl">Volume scatter color</span></div><div class="foot" style="top:432.30px;height:7.20px"></div><svg class="a" style="left:0;top:432.50px" width="103" height="8" viewBox="0 0 103 8"><path d="M102.4,0 L102.4,2.2 L96.8,7.4 L0,7.4" fill="none" stroke="#2a2e33" stroke-width="1.3"/></svg><div class="slot on" style="left:-4.40px;top:131.60px"></div><div class="slot on" style="left:-4.40px;top:145.35px"></div><div class="slot on" style="left:-4.40px;top:159.10px"></div><div class="slot" style="left:-4.40px;top:172.85px"></div><div class="slot" style="left:-4.40px;top:186.60px"></div><div class="slot" style="left:-4.40px;top:200.35px"></div><div class="slot" style="left:-4.40px;top:214.10px"></div><div class="slot" style="left:-4.40px;top:227.85px"></div><div class="slot" style="left:-4.40px;top:241.60px"></div><div class="slot" style="left:-4.40px;top:255.35px"></div><div class="slot" style="left:-4.40px;top:269.10px"></div><div class="slot" style="left:-4.40px;top:282.85px"></div><div class="slot" style="left:-4.40px;top:296.60px"></div><div class="slot on" style="left:-4.40px;top:310.35px"></div><div class="slot" style="left:-4.40px;top:324.10px"></div><div class="slot" style="left:-4.40px;top:337.85px"></div><div class="slot" style="left:-4.40px;top:351.60px"></div><div class="slot" style="left:-4.40px;top:365.35px"></div><div class="slot" style="left:-4.40px;top:379.10px"></div><div class="slot" style="left:-4.40px;top:392.85px"></div><div class="slot" style="left:-4.40px;top:406.60px"></div><div class="slot" style="left:-4.40px;top:420.35px"></div><div class="slot" style="left:104.10px;top:215.35px"></div></div>
</body></html>
